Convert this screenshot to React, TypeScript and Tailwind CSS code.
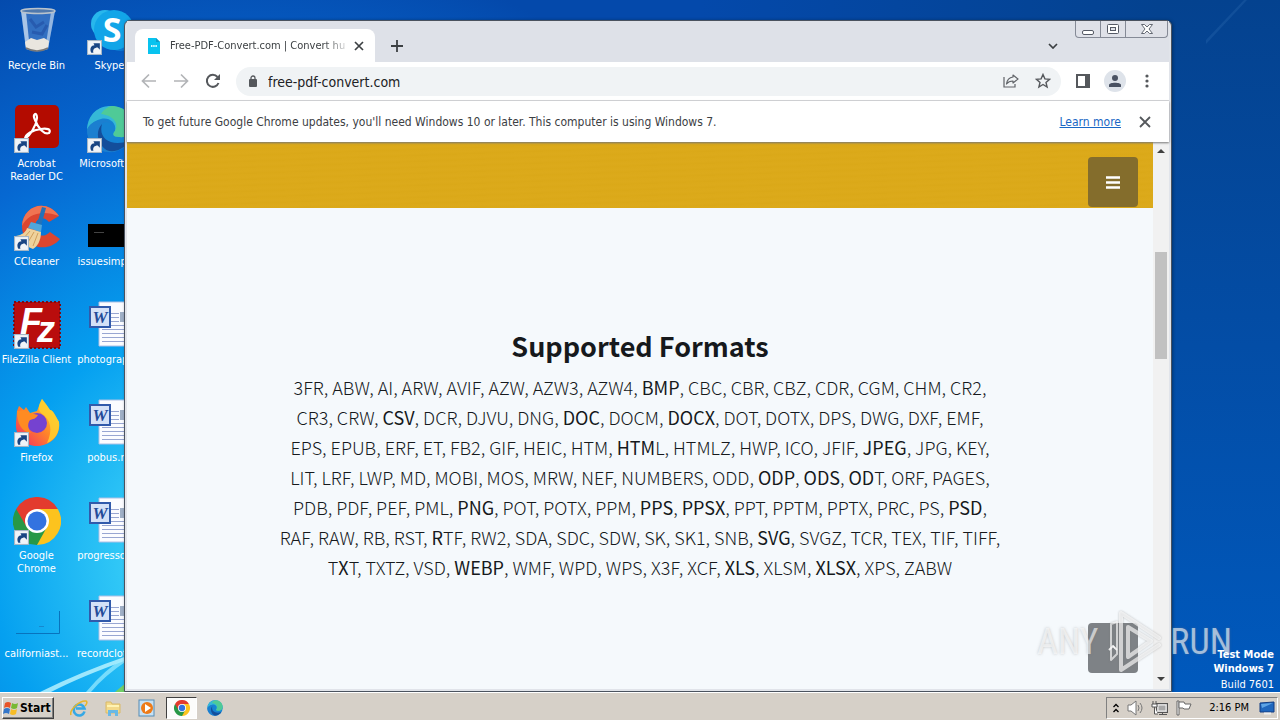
import React, { FC, ReactNode } from "react";

interface DesktopItem {
  label: string;
  icon: ReactNode;
  shortcut?: boolean;
}

const formatRows: string[] = [
  "3FR, ABW, AI, ARW, AVIF, AZW, AZW3, AZW4, *BMP*, CBC, CBR, CBZ, CDR, CGM, CHM, CR2,",
  "CR3, CRW, *CSV*, DCR, DJVU, DNG, *DOC*, DOCM, *DOCX*, DOT, DOTX, DPS, DWG, DXF, EMF,",
  "EPS, EPUB, ERF, ET, FB2, GIF, HEIC, HTM, *HTM*L, HTMLZ, HWP, ICO, JFIF, *JPEG*, JPG, KEY,",
  "LIT, LRF, LWP, MD, MOBI, MOS, MRW, NEF, NUMBERS, ODD, *ODP*, *ODS*, *OD*T, ORF, PAGES,",
  "PDB, PDF, PEF, PML, *PNG*, POT, POTX, PPM, *PPS*, *PPSX*, PPT, PPTM, PPTX, PRC, PS, *PSD*,",
  "RAF, RAW, RB, RST, *R*TF, RW2, SDA, SDC, SDW, SK, SK1, SNB, *SVG*, SVGZ, TCR, TEX, TIF, TIFF,",
  "T*X*T, TXTZ, VSD, *WEBP*, WMF, WPD, WPS, X3F, XCF, *XLS*, XLSM, *XLSX*, XPS, ZABW",
];

const RecycleIcon = () => (
  <svg viewBox="0 0 48 48" className="size-12">
    <path d="M8 4 L13 42 Q24 48 35 42 L42 4 Z" fill="#4c80c8" fillOpacity=".65" />
    <path d="M8 4 L13 42 L17 43 L13 5 Z" fill="#dceaf7" fillOpacity=".7" />
    <path d="M42 4 L35 42 L32 43 L38 5 Z" fill="#bcd4ee" fillOpacity=".7" />
    <path d="M12 35 L18 31 L24 33 L31 31 L36 34 L35 41 Q24 47 13 41 Z" fill="#e9e6df" />
    <path d="M17 12 L23 20 L31 15 M19 25 L29 27 L34 18" stroke="#1f4fa4" strokeWidth="3" fill="none" opacity=".6" />
    <ellipse cx="25" cy="4" rx="17" ry="2.5" fill="#5079ad" stroke="#b9c3cc" strokeWidth="1.5" />
    <path d="M13 41 Q24 47 35 41" stroke="#777" strokeWidth="1.500" fill="none" />
  </svg>
);

const SkypeIcon = () => (
  <svg viewBox="0 0 48 48" className="size-12">
    <circle cx="19" cy="17" r="14" fill="#28b7ec" />
    <circle cx="34" cy="30" r="14" fill="#0a78d0" />
    <circle cx="28" cy="23" r="20" fill="#12a5e8" />
    <text x="26" y="35" textAnchor="middle" fontSize="34" fontWeight="700" fill="#fff" fontFamily="Open Sans">S</text>
  </svg>
);

const AcrobatIcon = () => (
  <svg viewBox="0 0 48 48" className="size-12">
    <rect x="2" y="0" width="44" height="43" rx="5" fill="#b30b00" />
    <path
      d="M12 34 C17 30 23 22 24 13 C24 6 19 9 22 15 C25 23 31 30 36 28 C39 24 33 23 28 24 C20 25 12 29 12 34 Z"
      fill="none"
      stroke="#fff"
      strokeWidth="2.200"
      strokeLinejoin="round"
    />
  </svg>
);

const EdgeIcon: FC<{ className?: string }> = ({ className = "size-12" }) => (
  <svg viewBox="0 0 48 48" className={className}>
    <circle cx="24" cy="24" r="23" fill="#1583d3" />
    <path d="M1 25 C2 9 12 1 25 1 C39 1 47 11 47 21 C47 29 40 33 33 32 C27 32 26 29 29 26 C31 17 22 12 15 14 C8 16 3 20 1 25 Z" fill="#35b8d7" />
    <path d="M25 1 C39 1 47 11 47 21 C47 29 40 33 33 32 C27 32 26 29 29 26 C34 17 25 10 15 9 C18 4 22 2 25 1 Z" fill="#58d081" opacity=".75" />
    <path d="M16 19 C9 29 16 44 31 46 C20 50 1 44 1 25 C4 15 22 10 29 22 C25 17 19 16 16 19 Z" fill="#1b7fd0" />
    <path d="M16 19 C12 33 24 42 43 36 C36 47 22 50 16 41 C10 33 11 24 16 19 Z" fill="#134e9b" />
  </svg>
);

const CCleanerIcon = () => (
  <svg viewBox="0 0 48 48" className="size-12">
    <path d="M46 13 C34 -5 10 2 9 23 C9 45 35 51 47 36 L37 29 C30 36 22 32 22 24 C22 15 31 12 36 19 Z" fill="#dc4630" />
    <path d="M46 13 C34 -5 10 2 9 23 C14 12 28 6 46 13 Z" fill="#f07452" />
    <path d="M29 4 L33 5 L28 23 L24 21 Z" fill="#2372b8" />
    <path d="M18 19 L29 22 L28 29 L15 25 Z" fill="#4ea6dc" />
    <path d="M14 25 L28 29 C28 38 24 44 20 46 C12 43 6 37 3 33 C9 32 13 29 14 25 Z" fill="#efd29c" />
    <path d="M17 28 L9 37 M21 29 L14 41 M25 30 L20 43" stroke="#cf9f5c" strokeWidth="1" />
  </svg>
);

const FileZillaIcon = () => (
  <svg viewBox="0 0 48 48" className="size-12">
    <rect x="1" y="1" width="46" height="46" fill="#b90d0d" />
    <rect x="1" y="1" width="46" height="46" fill="none" stroke="#7c0a14" strokeWidth="2" strokeDasharray="2 2" />
    <text x="7" y="33" fontSize="36" fontWeight="700" fontStyle="italic" fill="#fff" fontFamily="Liberation Sans">
      F<tspan dx="-5" dy="8">z</tspan>
    </text>
  </svg>
);

const FirefoxIcon = () => (
  <svg viewBox="0 0 48 48" className="size-12">
    <defs>
      <linearGradient id="fox" x1="1" y1="0" x2="0" y2="1">
        <stop offset="0" stopColor="#ffe13a" />
        <stop offset=".5" stopColor="#ff8628" />
        <stop offset="1" stopColor="#f0246b" />
      </linearGradient>
    </defs>
    <path d="M4 12 L6 7 L11 11 L13 8 L17 14 L24 12 L29 0 C33 5 35 8 37 11 C40 11 42 16 46 23 C48 38 36 47 24 47 C11 47 2 37 3 24 Z" fill="url(#fox)" />
    <path d="M29 0 C33 5 35 8 37 11 C40 11 42 16 46 23 C47 33 42 41 34 44 C40 31 38 20 28 14 C24 10 26 5 29 0 Z" fill="#ffd32e" opacity=".8" />
    <circle cx="24" cy="24" r="10" fill="#7542d0" />
    <path d="M4 12 L11 11 L17 14 L25 16 C23 20 20 20 17 21 C14 25 15 30 18 34 C9 33 4 25 4 12 Z" fill="#ff8b22" />
  </svg>
);

const ChromeIcon: FC<{ className?: string }> = ({ className = "size-12" }) => (
  <svg viewBox="0 0 48 48" className={className}>
    <path d="M24 24 L3.200 12 A24 24 0 0 1 44.800 12 Z" fill="#e33b2e" />
    <path d="M24 24 L44.800 12 A24 24 0 0 1 24 48 Z" fill="#fcc31e" />
    <path d="M24 24 L24 48 A24 24 0 0 1 3.200 12 Z" fill="#279847" />
    <path d="M24 12 H44.800 L34 30 Z" fill="#fcc31e" />
    <path d="M34 30 L24 48 L15 33 Z" fill="#279847" />
    <path d="M13 29 L3.200 12 L24 12 Z" fill="#e33b2e" />
    <circle cx="24" cy="24" r="12" fill="#fff" />
    <circle cx="24" cy="24" r="9.500" fill="#3373e0" />
  </svg>
);

const WordIcon = () => (
  <svg viewBox="0 0 48 48" className="size-12">
    <path d="M13 1 H48 V45 H13 Z" fill="#fbfcff" stroke="#adc0e5" />
    <path d="M25 12.500 H33 M25 16.500 H33 M25 20.500 H33 M25 24.500 H46 M16 28.500 H46 M16 32.500 H46 M16 36.500 H46 M16 40.500 H46" stroke="#98a6d2" />
    <rect x="34" y="11" width="12" height="10" fill="#a0b0c6" />
    <rect x="4" y="6" width="20" height="20" fill="#d4e1f7" stroke="#315aab" strokeWidth="2" />
    <text x="14" y="22" textAnchor="middle" fontSize="17" fontWeight="700" fontStyle="italic" fill="#244b99" fontFamily="Liberation Serif">W</text>
  </svg>
);

const BlackFileIcon = () => (
  <svg viewBox="0 0 48 48" className="size-12">
    <rect x="2" y="21" width="46" height="23" fill="#000" />
    <path d="M8 29.500 H18" stroke="#444" />
  </svg>
);

const ClearFileIcon = () => (
  <svg viewBox="0 0 48 48" className="size-12">
    <path d="M3 38.500 H46.500 V16" fill="none" stroke="#0873bd" />
    <path d="M26 31.500 H31" stroke="#1688cf" />
  </svg>
);

const ShortcutArrow = () => (
  <svg viewBox="0 0 14 14" className="absolute bottom-0 left-px size-[15px]">
    <rect x=".5" y=".5" width="13" height="13" fill="#f0f4f8" stroke="#a5b6c6" />
    <path d="M4 12 C2 8 4 5 7 5 L6 3 L12 3 L12 9 L10 7 C7 7 5 9 6 12 Z" fill="#194583" />
  </svg>
);

// column by column, top to bottom
const desktopItems: DesktopItem[] = [
  { label: "Recycle Bin", icon: <RecycleIcon /> },
  { label: "Acrobat Reader DC", icon: <AcrobatIcon />, shortcut: true },
  { label: "CCleaner", icon: <CCleanerIcon />, shortcut: true },
  { label: "FileZilla Client", icon: <FileZillaIcon />, shortcut: true },
  { label: "Firefox", icon: <FirefoxIcon />, shortcut: true },
  { label: "Google Chrome", icon: <ChromeIcon />, shortcut: true },
  { label: "californiast...", icon: <ClearFileIcon /> },
  { label: "Skype", icon: <SkypeIcon />, shortcut: true },
  { label: "Microsoft Ed", icon: <EdgeIcon />, shortcut: true },
  { label: "issuesimple.j", icon: <BlackFileIcon /> },
  { label: "photograph.r", icon: <WordIcon /> },
  { label: "pobus.rtf", icon: <WordIcon /> },
  { label: "progressover", icon: <WordIcon /> },
  { label: "recordclothin", icon: <WordIcon /> },
];

const Wallpaper = () => (
  <svg viewBox="0 0 1280 692" preserveAspectRatio="none" className="absolute inset-0 size-full">
    <defs>
      <radialGradient id="glow" gradientUnits="userSpaceOnUse" cx="240" cy="560" r="620">
        <stop offset="0" stopColor="#65e6fc" />
        <stop offset=".2" stopColor="#2fc6f6" />
        <stop offset=".4" stopColor="#05a0f0" />
        <stop offset=".7" stopColor="#0668d2" />
        <stop offset="1" stopColor="#0449ab" />
      </radialGradient>
      <linearGradient id="side" x1="0" y1="0" x2="0" y2="1">
        <stop offset="0" stopColor="#04428f" />
        <stop offset=".5" stopColor="#034da6" />
        <stop offset="1" stopColor="#0059bd" />
      </linearGradient>
      <linearGradient id="top" x1="0" y1="0" x2="1" y2="0">
        <stop offset="0" stopColor="#04428f" stopOpacity="0" />
        <stop offset="1" stopColor="#04428f" />
      </linearGradient>
    </defs>
    <rect width="1280" height="692" fill="url(#glow)" />
    <rect x="700" width="460" height="24" fill="url(#top)" />
    <rect x="1160" width="120" height="692" fill="url(#side)" />
    <path d="M1206 40 L1244 0 H1247 L1206 44 Z" fill="#5b9ad8" opacity=".15" />
    <path d="M40 692 Q80 672 130 655 L130 659 Q82 676 51 692 Z" fill="#bff5ff" opacity=".8" />
    <path d="M86 692 Q104 670 128 655 L128 660 Q104 676 91 692 Z" fill="#9cecff" opacity=".7" />
    <path d="M115 692 L127 682 V692 Z" fill="#72cf67" />
  </svg>
);

const DesktopIcons = () => (
  <ul className="absolute left-0 top-0 grid grid-flow-col grid-rows-[repeat(7,98px)] auto-cols-[73px]">
    {desktopItems.map((item) => (
      <li key={item.label} className="flex flex-col items-center pt-[7px]">
        <div className="relative size-12">
          {item.icon}
          {item.shortcut && <ShortcutArrow />}
        </div>
        <span
          className={
            item.label.includes("Reader") || item.label === "Google Chrome"
              ? "mt-1 w-16 text-center leading-[13px] text-white"
              : "mt-1 whitespace-nowrap text-center leading-[13px] text-white"
          }
        >
          {item.label}
        </span>
      </li>
    ))}
  </ul>
);

const TabStrip = () => (
  <div className="flex h-[41px] items-end bg-[#dee1e8] pl-2">
    <div className="flex h-[33px] w-60 items-center rounded-t-lg bg-white pl-3 pr-2">
      <svg viewBox="0 0 14 16" className="h-4 w-3.5 shrink-0">
        <path d="M1 0 H9 L13 4 V16 H1 Z" fill="#08c3ef" />
        <path d="M9 0 V4 H13 Z" fill="#0e9cc8" />
        <path d="M4 8 H10" stroke="#d9f8ff" strokeWidth="2" strokeDasharray="1.500 .7" />
      </svg>
      <span className="ml-[9px] flex-1 whitespace-nowrap pt-0.5 text-[#3c4043] [mask-image:linear-gradient(to_right,black_85%,transparent)]">
        Free-PDF-Convert.com | Convert hu
      </span>
      <button aria-label="Close tab" className="grid size-4 place-items-center">
        <svg viewBox="0 0 10 10" className="size-2.5">
          <path d="M1 1 L9 9 M9 1 L1 9" stroke="#3c4043" strokeWidth="1.700" />
        </svg>
      </button>
    </div>
    <button aria-label="New tab" className="ml-3 grid h-[33px] w-5 place-items-center">
      <svg viewBox="0 0 12 12" className="size-3">
        <path d="M6 0 V12 M0 6 H12" stroke="#3c4043" strokeWidth="1.800" />
      </svg>
    </button>
    <button aria-label="Search tabs" className="ml-auto mr-[110px] grid h-[33px] w-3 place-items-center">
      <svg viewBox="0 0 10 6" className="h-1.5 w-2.5">
        <path d="M1 1 L5 5 L9 1" fill="none" stroke="#3c4043" strokeWidth="1.700" />
      </svg>
    </button>
  </div>
);

const CaptionButtons = () => (
  <div className="absolute right-[3px] top-0 flex h-[17px] rounded-b-sm border border-t-0 border-[#858a96] bg-[#dfe1e8]">
    <button aria-label="Minimize" className="grid w-[25px] place-items-center border-r border-[#858a96]">
      <svg viewBox="0 0 13 11" className="h-[11px] w-[13px]">
        <rect x=".5" y="6.500" width="11" height="4" rx="1.500" fill="#fff" stroke="#555a65" />
      </svg>
    </button>
    <button aria-label="Restore" className="grid w-[25px] place-items-center border-r border-[#858a96]">
      <svg viewBox="0 0 13 11" className="h-[11px] w-[13px]">
        <rect x=".5" y=".5" width="11" height="9" rx="1" fill="#fff" stroke="#555a65" />
        <rect x="3.500" y="3.500" width="5" height="3" fill="#dfe1e8" stroke="#555a65" />
      </svg>
    </button>
    <button aria-label="Close" className="grid w-[41px] place-items-center">
      <svg viewBox="0 0 12 10" className="h-2.5 w-3">
        <path d="M.5 .5 H3.500 L6 3 L8.500 .5 H11.500 L8 5 L11.500 9.500 H8.500 L6 7 L3.500 9.500 H.5 L4 5 Z" fill="#fff" stroke="#555a65" strokeWidth=".9" />
      </svg>
    </button>
  </div>
);

const Toolbar = () => (
  <div className="flex h-[39px] items-center border-b border-[#d5d7da] bg-white px-3.5">
    <button aria-label="Back" className="grid size-4 place-items-center text-[#b2b4b7]">
      <svg viewBox="0 0 16 16" className="size-4" fill="none" stroke="currentColor" strokeWidth="1.700">
        <path d="M15 8 H2 M8 1.500 L1.500 8 L8 14.500" />
      </svg>
    </button>
    <button aria-label="Forward" className="ml-4 grid size-4 place-items-center text-[#b2b4b7]">
      <svg viewBox="0 0 16 16" className="size-4" fill="none" stroke="currentColor" strokeWidth="1.700">
        <path d="M1 8 H14 M8 1.500 L14.500 8 L8 14.500" />
      </svg>
    </button>
    <button aria-label="Reload" className="ml-4 grid size-4 place-items-center text-[#55585c]">
      <svg viewBox="0 0 16 16" className="size-4" fill="none" stroke="currentColor" strokeWidth="2">
        <path d="M13.500 10 A6 6 0 1 1 12.500 4" />
        <path d="M15 1 V7 H9 Z" fill="currentColor" stroke="none" />
      </svg>
    </button>
    <div className="ml-[15px] flex h-[29px] flex-1 items-center rounded-full bg-[#f0f3f5] pl-3 pr-2.5">
      <svg viewBox="0 0 10 12" className="h-3 w-2.5">
        <rect x="1" y="4" width="8" height="8" rx="1" fill="#55585c" />
        <path d="M3 5 V3 A2 2 0 0 1 7 3 V5" fill="none" stroke="#55585c" strokeWidth="1.300" />
      </svg>
      <input
        aria-label="Address"
        defaultValue="free-pdf-convert.com"
        className="ml-2.5 min-w-0 flex-1 bg-transparent pt-px text-sm text-[#202124] outline-none"
      />
      <button aria-label="Share" className="grid size-4 place-items-center">
        <svg viewBox="0 0 16 16" className="size-4" fill="none" stroke="#606368" strokeWidth="1.200">
          <path d="M1 4 V14 H12 V11" />
          <path d="M10 2 L15 6 L10 10 V8 C7 8 5 9 3.500 11 C4 7 6 4.500 10 4 Z" strokeLinejoin="round" />
        </svg>
      </button>
      <button aria-label="Bookmark" className="ml-4 grid size-4 place-items-center">
        <svg viewBox="0 0 16 16" className="size-4" fill="none" stroke="#55585c" strokeWidth="1.400">
          <path d="M8 1.500 L9.900 5.900 L14.600 6.300 L11 9.400 L12.100 14 L8 11.500 L3.900 14 L5 9.400 L1.400 6.300 L6.100 5.900 Z" />
        </svg>
      </button>
    </div>
    <button aria-label="Side panel" className="ml-[15px] grid size-3.5 place-items-center">
      <svg viewBox="0 0 14 14" className="size-3.5">
        <rect x="1" y="1" width="12" height="12" fill="none" stroke="#55585c" strokeWidth="2" />
        <rect x="9" y="1" width="4" height="12" fill="#55585c" />
      </svg>
    </button>
    <button aria-label="Profile" className="ml-3.5 grid size-[22px] place-items-center rounded-full bg-[#dee3ea]">
      <svg viewBox="0 0 14 14" className="size-3.5" fill="#4a5263">
        <circle cx="7" cy="4" r="3" />
        <path d="M1 13 V11 C1 8 13 8 13 11 V13 Z" />
      </svg>
    </button>
    <button aria-label="Menu" className="ml-[13px] grid h-4 w-4 place-items-center">
      <svg viewBox="0 0 4 16" className="h-4 w-1" fill="#55585c">
        <circle cx="2" cy="3" r="1.600" />
        <circle cx="2" cy="8" r="1.600" />
        <circle cx="2" cy="13" r="1.600" />
      </svg>
    </button>
  </div>
);

const InfoBar = () => (
  <div className="relative z-10 flex h-[41px] items-center bg-white pl-4 pr-[18px] text-xs text-[#3c4043] shadow-[0_1px_2px_#777]">
    <p className="whitespace-nowrap">
      To get future Google Chrome updates, you'll need Windows 10 or later. This computer is using Windows 7.
    </p>
    <a href="#" className="ml-auto text-[#1967c5] underline">
      Learn more
    </a>
    <button aria-label="Dismiss" className="ml-[18px] grid size-3 place-items-center">
      <svg viewBox="0 0 12 12" className="size-3">
        <path d="M1 1 L11 11 M11 1 L1 11" stroke="#55585c" strokeWidth="1.800" />
      </svg>
    </button>
  </div>
);

const FormatRow: FC<{ text: string }> = ({ text }) => (
  <span className="block whitespace-nowrap">
    {text.split("*").map((part, i) =>
      i % 2 ? (
        <span key={i} className="font-normal">
          {part}
        </span>
      ) : (
        part
      )
    )}
  </span>
);

const WebPage = () => (
  <div className="flex min-h-0 flex-1">
    <main className="relative flex-1 overflow-hidden bg-[#f5f9fc]">
      <header className="flex h-[66px] items-end justify-end bg-[#dba918] bg-[repeating-linear-gradient(178deg,#dba919_0px,#dcaa1b_3px,#daa818_6px)] pb-px pr-[15px]">
        <button aria-label="Open navigation" className="grid size-[50px] place-items-center rounded bg-[#846d2c]">
          <svg viewBox="0 0 14 13" className="h-[13px] w-3.5">
            <path d="M0 1.500 H14 M0 6.500 H14 M0 11.500 H14" stroke="#fff" strokeWidth="2.400" />
          </svg>
        </button>
      </header>
      <section className="pt-[117px] text-center font-['Noto_Sans_CJK_SC','Noto_Sans',sans-serif] text-[#16191c]">
        <h1 className="text-[27px] font-bold leading-[42px]">Supported Formats</h1>
        <p className="mt-[5px] text-[18px] font-light leading-[30px]">
          {formatRows.map((row) => (
            <FormatRow key={row} text={row} />
          ))}
        </p>
      </section>
      <button aria-label="Back to top" className="absolute bottom-4 right-[15px] grid size-[50px] place-items-center rounded bg-[#7e8286]">
        <svg viewBox="0 0 10 6" className="h-1.5 w-2.5">
          <path d="M1 5 L5 1 L9 5" fill="none" stroke="#fff" strokeWidth="1.800" />
        </svg>
      </button>
    </main>
    <div className="flex w-4 flex-col items-center bg-[#f1f1f1]">
      <svg viewBox="0 0 16 16" className="mt-px size-4">
        <path d="M4 10 L8 6 L12 10 Z" fill="#404040" />
      </svg>
      <div className="mt-[93px] h-[107px] w-3 bg-[#c1c1c1]" />
      <svg viewBox="0 0 16 16" className="mt-auto size-4">
        <path d="M4 4 L8 8 L12 4 Z" fill="#404040" />
      </svg>
    </div>
  </div>
);

const BrowserWindow = () => (
  <div className="absolute bottom-0 left-[124px] right-[108px] top-5 flex flex-col rounded-t-md border border-[#4b535f] bg-[#e1e4ea] px-0.5 pb-0.5 shadow-[1px_0_3px_#00204088]">
    <TabStrip />
    <CaptionButtons />
    <Toolbar />
    <InfoBar />
    <WebPage />
  </div>
);

const Watermark = () => (
  <div className="pointer-events-none absolute bottom-[18px] right-12 flex h-16 items-center font-['Liberation_Sans_Narrow','Roboto_Condensed','Liberation_Sans',sans-serif] text-4xl text-white/60 [text-shadow:0_0_3px_#7776]">
    <span>ANY</span>
    <svg viewBox="0 0 56 64" className="mx-2 h-16 w-14 drop-shadow-[0_0_1px_#777a]" fill="none" stroke="#fff" strokeOpacity=".65" strokeWidth="4" strokeLinejoin="round" strokeLinecap="round">
      <path d="M5 14 V50 L11 44 V12 Z" strokeWidth="2" />
      <path d="M15 44 V3 L53 28 M15 3 V60 L53 35" />
      <path d="M22 17 L45 31 L22 47 Z" />
    </svg>
    <span>RUN</span>
  </div>
);

const Taskbar = () => (
  <footer className="relative z-10 flex h-7 items-center border-t border-white bg-[#d6d0c8] pl-0.5 pr-0.5 pt-0.5 text-black">
    <button className="flex h-[22px] w-[52px] items-center border border-b-[#404040] border-l-white border-r-[#404040] border-t-white text-xs font-bold shadow-[inset_-1px_-1px_#808080]">
      <svg viewBox="0 0 16 16" className="size-4 shrink-0">
        <path d="M2 3 Q5 1 8 3 L7 8 Q4 6 1 8 Z" fill="#e85327" />
        <path d="M9 3 Q12 5 15 3 L14 8 Q11 10 8 8 Z" fill="#78b934" />
        <path d="M1 9 Q4 7 7 9 L6 14 Q3 12 0 14 Z" fill="#3476c9" />
        <path d="M8 9 Q11 11 14 9 L13 14 Q10 16 7 14 Z" fill="#f7bc25" />
      </svg>
      <span className="ml-px">Start</span>
    </button>
    <button aria-label="Internet Explorer" className="ml-4 grid size-[18px] place-items-center">
      <svg viewBox="0 0 18 18" className="size-[18px]">
        <path d="M14.500 12.500 A5.500 5.500 0 1 1 14.500 9.500 H6" fill="none" stroke="#35a8e5" strokeWidth="2.600" />
        <path d="M1 16 C-1 11 10 1 16 2 C18 3 16 6 15 7" fill="none" stroke="#e7b52a" strokeWidth="1.500" />
      </svg>
    </button>
    <button aria-label="Windows Explorer" className="ml-4 grid size-[18px] place-items-center">
      <svg viewBox="0 0 18 18" className="size-[18px]">
        <path d="M2 3 H7 L8 5 H16 V14 H2 Z" fill="#f3d98a" stroke="#d9ba68" />
        <path d="M3 7 H15" stroke="#fff3b3" strokeWidth="2" />
        <path d="M4 17 V11 H14 V17 H11 V14 H7 V17 Z" fill="#69b9e6" />
      </svg>
    </button>
    <button aria-label="Media Player" className="ml-4 grid size-[18px] place-items-center">
      <svg viewBox="0 0 18 18" className="size-[18px]">
        <rect x="1" y="1" width="15" height="16" fill="#c7e1f4" stroke="#548cb5" />
        <circle cx="9" cy="9" r="6" fill="#ee7b18" />
        <path d="M7 5 L13 9 L7 13 Z" fill="#fff" />
      </svg>
    </button>
    <button aria-label="Google Chrome" className="ml-2.5 grid h-[22px] w-[31px] place-items-center border border-b-white border-l-[#404040] border-r-white border-t-[#404040] bg-[#fcfcfb]">
      <ChromeIcon className="size-4" />
    </button>
    <button aria-label="Microsoft Edge" className="ml-2.5 grid size-4 place-items-center">
      <EdgeIcon className="size-4" />
    </button>
    <div className="ml-auto flex h-[22px] w-[172px] items-center border border-b-white border-l-[#808080] border-r-white border-t-[#808080] pl-1.5 pr-0.5">
      <svg viewBox="0 0 6 10" className="h-2.5 w-1.5" fill="none" stroke="#000" strokeWidth="1.300">
        <path d="M.5 4 L3 1.500 L5.500 4 M.5 9 L3 6.500 L5.500 9" />
      </svg>
      <svg viewBox="0 0 18 16" className="ml-2 h-4 w-[18px]" fill="none" stroke="#777">
        <path d="M1 5 H4 L9 1 V15 L4 11 H1 Z" fill="#fff" />
        <path d="M11 5 Q13 8 11 11 M13 3 Q17 8 13 13" />
      </svg>
      <svg viewBox="0 0 18 16" className="ml-1.5 h-4 w-[18px]" fill="none" stroke="#555">
        <rect x="5.500" y="3.500" width="11" height="9" fill="#bbb" stroke="#555" />
        <rect x="7" y="5" width="8" height="6" fill="#a8a8a8" stroke="#f4f4f4" />
        <path d="M8 14.500 H16 M11.500 12 V14" />
        <path d="M2 1 V4 M5 1 V4 M1 4 H6 V7 H1 Z M3.500 7 V14 H7" fill="#fff" />
      </svg>
      <svg viewBox="0 0 18 16" className="ml-1.5 h-4 w-[18px]" fill="#fff" stroke="#666">
        <path d="M2 1 H4 V15 H2 Z" />
        <path d="M4 2 H9 L10 4 H16 L14 9 H9 L8 8 H4 Z" />
      </svg>
      <time className="ml-auto whitespace-nowrap pt-px">2:16 PM</time>
      <svg viewBox="0 0 16 14" className="ml-2.5 h-3.5 w-4">
        <path d="M1 2 L15 1 V11 L1 11 Z" fill="#2067bd" stroke="#123d83" />
        <path d="M2 3 L14 2 L3 7 Z" fill="#5ea4e5" />
        <path d="M5 12.500 H12" stroke="#eee" strokeWidth="2" />
      </svg>
    </div>
  </footer>
);

const App: FC = () => {
  return (
    <div className="flex h-screen flex-col overflow-hidden font-['DejaVu_Sans_Condensed','Noto_Sans',sans-serif] text-[11px]">
      <div className="relative flex-1 overflow-hidden bg-[#0350b0]">
        <Wallpaper />
        <DesktopIcons />
        <BrowserWindow />
        <Watermark />
        <div className="absolute bottom-0 right-1.5 flex flex-col text-right leading-[14px] text-white">
          <strong>Test Mode</strong>
          <strong>Windows 7</strong>
          <span className="mt-0.5">Build 7601</span>
        </div>
      </div>
      <Taskbar />
    </div>
  );
};

export default App;
